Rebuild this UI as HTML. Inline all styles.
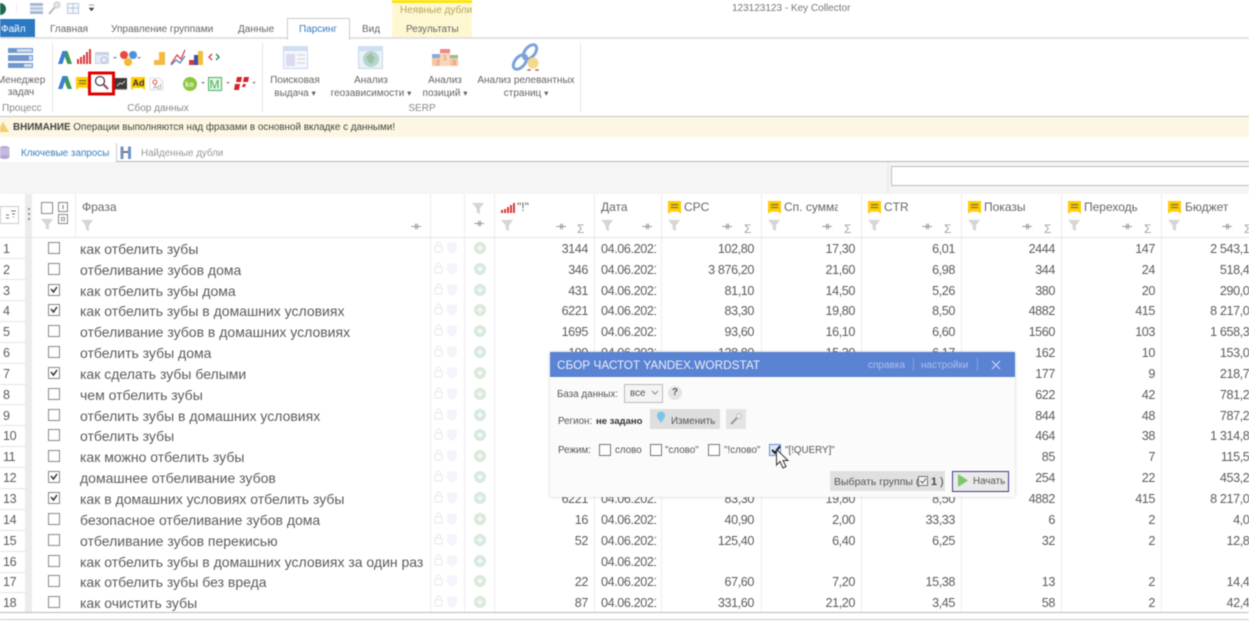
<!DOCTYPE html>
<html lang="ru"><head><meta charset="utf-8"><title>Key Collector</title>
<style>
html,body{margin:0;padding:0;background:#fff}
#p{position:relative;width:1249px;height:622px;overflow:hidden;background:#fff;font-family:"Liberation Sans",sans-serif;color:#666;filter:blur(.5px)}
#p div,#p span,#p svg{position:absolute}
.t{white-space:nowrap;font-size:10px;line-height:12px;color:#666}
.ce{transform:translateX(-50%);text-align:center}
.h{white-space:nowrap;font-size:12px;line-height:16px;color:#666;top:199px}
.s{white-space:nowrap;font-size:12px;line-height:16px;color:#a5a5a5;top:221px}
.r{left:0;width:1249px;height:21px;line-height:21px;font-size:12.6px;letter-spacing:-.4px;color:#5c5c5c;overflow:hidden;white-space:nowrap}
.r span{top:1px}
.n{left:3px}.r .f{left:80px;font-size:14px;letter-spacing:0}
.a{right:661px}.d{left:601px;width:55px;overflow:hidden}.b{right:495px}.c{right:394px}.e{right:294px}.g{right:194px}.k{right:94px}.l{right:-7px}
.dt{white-space:nowrap;font-size:9.8px;line-height:14px;color:#555}
.cb{width:10px;height:10px;border:1px solid #777;background:#fff}
</style></head><body><div id="p">

<svg width="0" height="0" style="left:0;top:0">
<defs>
<symbol id="fl" viewBox="0 0 14 14"><path d="M0 1H13L8.500 7V13L5 11V7Z" fill="#d6d6d6"/></symbol>
<symbol id="pin" viewBox="0 0 12 10"><path d="M0 5H11M5 2V8M7 2V8" stroke="#999" stroke-width="1.200" fill="none"/></symbol>
<symbol id="tag" viewBox="0 0 14 14"><path d="M0 0H14V14L11 11.500H3L0 14Z" fill="#fc0"/><path d="M3 4H11M3 7H11" stroke="#664" stroke-width="1.200"/></symbol>
<symbol id="A" viewBox="0 0 14 14"><path d="M4.500 0H9.500L14 13H9.500Z" fill="#3f9a5a"/><path d="M4.500 0H8.500L4.500 13H0Z" fill="#3d7fd6"/></symbol>
<g id="rowi">
<rect x="435" y="-3" width="7" height="6" rx="1" fill="none" stroke="#e8e8e8"/><path d="M436.500 -3V-5A2 2 0 0 1 440.500 -5V-3" fill="none" stroke="#e8e8e8"/>
<path d="M447 -6L452 -7L457 -6V-1C457 2 454 4 452 5C450 4 447 2 447 -1Z" fill="#f3f5fb"/>
<circle cx="480" cy="-1" r="6" fill="#d9e9dc"/><path d="M477 -1H483M480 -4V2" stroke="#fff" stroke-width="1.300"/>
</g>
<rect id="box" x="48.500" y="-6.500" width="11" height="11" fill="#fff" stroke="#888"/>
<path id="chk" d="M51 -2L53.500 1L57 -4" fill="none" stroke="#333" stroke-width="1.500"/>
</defs>
</svg>

<!-- title row -->
<div style="left:0;top:3px;width:6px;height:12px;background:#1c6b4e;border-radius:0 6px 6px 0"></div>
<div style="left:16px;top:3px;width:1px;height:11px;background:#eee"></div>
<svg style="left:28px;top:1px" width="70" height="15"><rect x="2" y="2" width="13" height="3" fill="#a3b8d8"/><rect x="2" y="6" width="13" height="3" fill="#b6c6e0"/><rect x="2" y="10" width="13" height="3" fill="#a3b8d8"/><path d="M21 13L27 6" stroke="#bbb" stroke-width="2"/><circle cx="29" cy="4" r="3" fill="#e4e4e4" stroke="#ccc"/><rect x="39.500" y="2.500" width="11" height="10" fill="#f3f6fb" stroke="#b8c9e0"/><path d="M39 7H51M45 2V13" stroke="#b8c9e0"/><path d="M61 4H66M61 7H66L63.500 10Z" fill="#444" stroke="#444" stroke-width=".5"/></svg>
<div class="t" style="left:732px;top:3px;color:#777">123123123 - Key Collector</div>

<!-- contextual tab -->
<div style="left:392px;top:0;width:80px;height:37px;background:#fdf8d2"></div>
<div style="left:392px;top:0;width:80px;height:3px;background:#ffe500"></div>
<div class="t" style="left:400px;top:5px;color:#b5a65c">Неявные дубли</div>

<!-- tabs -->
<div style="left:0;top:19px;width:35px;height:19px;background:#2b79c2"></div>
<div class="t" style="left:1px;top:24px;color:#fff">Файл</div>
<div class="t" style="left:50px;top:24px">Главная</div>
<div class="t" style="left:111px;top:24px;font-size:10.100px">Управление группами</div>
<div class="t" style="left:238px;top:24px">Данные</div>
<div class="t" style="left:362px;top:24px">Вид</div>
<div class="t" style="left:406px;top:24px">Результаты</div>
<div style="left:0;top:37px;width:1249px;height:2px;background:#e2e2e2"></div>
<div style="left:287px;top:18px;width:61px;height:21px;background:#fff;border:1px solid #ccc;border-bottom:0"></div>
<div class="t" style="left:299px;top:24px;color:#3a7cbd">Парсинг</div>

<!-- ribbon -->
<div style="left:52px;top:43px;width:1px;height:69px;background:#e6e6e6"></div>
<div style="left:262px;top:43px;width:1px;height:69px;background:#e6e6e6"></div>
<div style="left:580px;top:43px;width:1px;height:69px;background:#e6e6e6"></div>
<svg style="left:0;top:40px" width="600" height="60">
<g fill="#6f97cd"><rect x="8" y="8" width="25" height="5"/><rect x="8" y="15" width="25" height="6"/><rect x="8" y="23" width="25" height="5"/></g>
<g fill="#cfdcf0"><rect x="17" y="9" width="15" height="3"/><rect x="29" y="16" width="3" height="4"/><rect x="24" y="24" width="8" height="3"/></g>
<use href="#A" x="58" y="11" width="14" height="14"/>
<path d="M78 24V19M81 24V17M84 24V15M87 24V12M90 24V9" stroke="#d8383a" stroke-width="2"/>
<rect x="95.500" y="12.500" width="13" height="11" fill="#e8ecf6" stroke="#c8d2e6"/><rect x="95" y="12" width="14" height="3" fill="#c8d2e6"/><circle cx="104" cy="20" r="3" fill="none" stroke="#b9b9d8"/>
<path d="M113 17H117L115 19Z" fill="#888"/>
<circle cx="124" cy="15" r="4" fill="#e8483f"/><circle cx="133" cy="15" r="4" fill="#4d90e0"/><circle cx="128" cy="22" r="4" fill="#f5b82e"/>
<path d="M137 17H141L139 19Z" fill="#888"/>
<path d="M154 20H159V25H154ZM159 12H165V25H159Z" fill="#f4b942"/>
<path d="M171 24L177 15L181 19L185 10" fill="none" stroke="#d84a4a" stroke-width="1.300"/><path d="M171 25L176 20L180 23L185 16" fill="none" stroke="#5a7fc0" stroke-width="1.300"/>
<rect x="189" y="20" width="5" height="5" fill="#d33a3a"/><rect x="194" y="15" width="4" height="10" fill="#3e4fb0"/><rect x="198" y="11" width="5" height="14" fill="#f2c037"/>
<path d="M212 14L209 17L212 20" fill="none" stroke="#d64c4c" stroke-width="1.500"/><path d="M216 14L219 17L216 20" fill="none" stroke="#3e8f5a" stroke-width="1.500"/>
<use href="#A" x="58" y="36" width="14" height="14"/>
<use href="#tag" x="76" y="37" width="13" height="13"/>
<rect x="89.500" y="33" width="24" height="21" fill="#fff" stroke="#e30000" stroke-width="3"/>
<circle cx="100" cy="41" r="4.500" fill="#fff" stroke="#444" stroke-width="1.300"/><path d="M103 44L108 49" stroke="#a33a6a" stroke-width="2"/>
<rect x="115" y="38" width="12" height="11" fill="#3a3a3a"/><path d="M117 46L120 43L122 44L125 41" stroke="#ccc" fill="none"/>
<rect x="115" y="49" width="12" height="1" fill="#aaa"/>
<path d="M131 37H145V50L142 48H134L131 50Z" fill="#fc0"/>
<text x="132.500" y="46" font-size="9" font-weight="bold" fill="#333" font-family="Liberation Sans">Ad</text>
<path d="M150 38H159L163 42V50H150Z" fill="#fff" stroke="#ddd"/><circle cx="155" cy="42" r="2" fill="none" stroke="#d55"/>
<text x="153" y="49" font-size="7" fill="#999" font-family="Liberation Sans">Ad</text>
<circle cx="190" cy="44" r="7" fill="#8cc63f"/>
<text x="185" y="47" font-size="8" font-weight="bold" fill="#e8f5d0" font-family="Liberation Sans">ke</text>
<path d="M201 42H205L203 44Z" fill="#888"/>
<rect x="208.500" y="37.500" width="13" height="13" fill="#e6f5e6" stroke="#44b25a"/>
<text x="209.500" y="48.500" font-size="12" fill="#44b25a" font-family="Liberation Sans">M</text>
<path d="M226 42H230L228 44Z" fill="#888"/>
<path d="M237 37H242L241 42H236ZM244 37H249L248 42H243ZM235 44H240L239 50H234ZM243 44H246L245 47H242Z" fill="#d8222a"/>
<path d="M252 42H256L254 44Z" fill="#888"/>
<rect x="283.500" y="6.500" width="24" height="22" fill="#f4f7fc" stroke="#c8d8ee"/><rect x="283" y="6" width="25" height="5" fill="#cfdef2"/><rect x="286" y="14" width="9" height="12" fill="#dcdaf0"/><path d="M297 15H305M297 19H305M297 23H305" stroke="#d4d4d4"/>
<rect x="358.500" y="6.500" width="24" height="22" fill="#eaf2f8" stroke="#c8d8ee"/><rect x="358" y="6" width="25" height="5" fill="#cfdef2"/><circle cx="371" cy="19" r="8" fill="#b5d6cd"/><path d="M366 17L371 13L375 18L372 24L368 22Z" fill="#9cc3a8"/>
<rect x="432" y="14" width="8" height="5" fill="#8aabdc"/><rect x="440" y="9" width="10" height="5" fill="#e88"/><rect x="450" y="15" width="8" height="5" fill="#8fc08f"/><rect x="432" y="18" width="26" height="8" fill="#f6c7a6"/><rect x="440" y="13" width="10" height="13" fill="#f9d5ba"/>
<text x="436" y="25" font-size="7" fill="#d08a5a" font-family="Liberation Sans">2</text><text x="443" y="20" font-size="7" fill="#d08a5a" font-family="Liberation Sans">1</text><text x="452" y="25" font-size="7" fill="#d08a5a" font-family="Liberation Sans">3</text>
<ellipse cx="530" cy="12" rx="8.500" ry="5" transform="rotate(-50 530 12)" fill="none" stroke="#7da2dc" stroke-width="3"/>
<ellipse cx="520" cy="22" rx="8.500" ry="5" transform="rotate(-50 520 22)" fill="none" stroke="#7da2dc" stroke-width="3"/>
<circle cx="533" cy="23" r="5.500" fill="#f2d98b"/><path d="M529 29V31M537 29V31M527 30H531M535 30H539" stroke="#d66" stroke-width="1.200"/>
</svg>
<div class="t ce" style="left:21px;top:75px">Менеджер<br>задач</div>
<div class="t" style="left:2px;top:103px;color:#888">Процесс</div>
<div class="t ce" style="left:158px;top:103px;color:#888">Сбор данных</div>
<div class="t ce" style="left:422px;top:103px;color:#888">SERP</div>
<div class="t ce" style="left:295px;top:75px">Поисковая<br>выдача <small>▾</small></div>
<div class="t ce" style="left:371px;top:75px">Анализ<br>геозависимости <small>▾</small></div>
<div class="t ce" style="left:445px;top:75px">Анализ<br>позиций <small>▾</small></div>
<div class="t ce" style="left:526px;top:75px">Анализ релевантных<br>страниц <small>▾</small></div>

<!-- warning -->
<div style="left:0;top:116px;width:1249px;height:1px;background:#c4c4c4"></div>
<div style="left:0;top:117px;width:1249px;height:20px;background:#fdf6e2"></div>
<svg style="left:0;top:121px" width="10" height="12"><path d="M3 1L9 11H-3Z" fill="#f2cf6e"/></svg>
<div class="t" style="left:13px;top:122px;color:#444;font-size:9.900px"><b>ВНИМАНИЕ</b> Операции выполняются над фразами в основной вкладке с данными!</div>

<!-- doc tabs -->
<svg style="left:0;top:145px" width="135" height="16"><ellipse cx="4.500" cy="3" rx="5" ry="2" fill="#b3a6d4"/><rect x="-.5" y="3" width="10" height="9" fill="#c4b9de"/><ellipse cx="4.500" cy="12" rx="5" ry="2" fill="#b3a6d4"/><path d="M120.500 1.500H123.500V14H120.500ZM128 1.500H131V14H128Z" fill="#6f93c6"/><path d="M123 7H128" stroke="#777" stroke-width="2"/></svg>
<div class="t" style="left:21px;top:148px;color:#3a80c0;font-size:9.900px">Ключевые запросы</div>
<div class="t" style="left:141px;top:148px;color:#999;font-size:9.800px">Найденные дубли</div>
<div style="left:116px;top:143px;width:1px;height:19px;background:#ccc"></div>

<!-- toolbar strip -->
<div style="left:0;top:162px;width:1249px;height:32px;background:#f6f5f5"></div>
<div style="left:116px;top:161px;width:1133px;height:1px;background:#b5b5b5"></div>
<div style="left:887px;top:162px;width:2px;height:32px;background:#ececec"></div>
<div style="left:891px;top:166px;width:360px;height:18px;background:#fff;border:1px solid #bdbdbd;border-radius:1px"></div>

<!-- grid chrome -->
<div style="left:26px;top:194px;width:6px;height:418px;background:#ececec"></div>
<div style="left:0;top:237px;width:1249px;height:1px;background:#e4e4e4"></div>
<svg style="left:0;top:194px" width="1249" height="418">
<g stroke="#ececec"><path d="M25.500 0V418M75.500 0V44M430.500 0V418M464.500 0V418M494.500 0V418M594.500 0V418M661.500 0V418M761.500 0V418M861.500 0V418M961.500 0V418M1061.500 0V418M1161.500 0V418"/></g>
<g stroke="#e4e4e4"><path d="M0 64.500H25M0 85.500H25M0 106.500H25M0 127.500H25M0 148.500H25M0 169.500H25M0 190.500H25M0 210.500H25M0 231.500H25M0 252.500H25M0 273.500H25M0 294.500H25M0 315.500H25M0 336.500H25M0 357.500H25M0 378.500H25M0 398.500H25"/></g>
<rect x="0.500" y="12.500" width="18" height="17" fill="#fff" stroke="#ccc"/>
<path d="M6 24H9M6 21H9M11 17H16M12 20H15M13 23H14" stroke="#777"/>
<path d="M29 14V16M29 19V21M29 24V26" stroke="#777" stroke-width="1.500"/>
<rect x="41.500" y="8.500" width="11" height="11" fill="#fff" stroke="#888"/>
<rect x="58.500" y="8.500" width="9" height="9" fill="#fff" stroke="#888"/><path d="M63 11V15" stroke="#777"/>
<rect x="58.500" y="20.500" width="9" height="9" fill="#fff" stroke="#888"/><rect x="61.500" y="23.500" width="3" height="3" fill="none" stroke="#999"/>
<use href="#fl" x="41" y="24" width="13" height="13"/>
<use href="#fl" x="81" y="25" width="13" height="13"/>
<use href="#pin" x="411" y="28" width="11" height="9"/>
<use href="#fl" x="472" y="8" width="13" height="13"/><use href="#pin" x="474" y="25" width="11" height="9"/>
<path d="M502 12V9M505 12V8M508 12V6M511 12V4M514 12V2" transform="translate(0,7)" stroke="#d8383a" stroke-width="2"/>
<use href="#fl" x="501" y="25" width="13" height="13"/><use href="#pin" x="556" y="28" width="11" height="9"/>
<use href="#fl" x="601" y="25" width="13" height="13"/><use href="#pin" x="642" y="28" width="11" height="9"/>
<use href="#tag" x="668" y="7" width="13" height="13"/><use href="#fl" x="668" y="25" width="13" height="13"/><use href="#pin" x="722" y="28" width="11" height="9"/>
<use href="#tag" x="768" y="7" width="13" height="13"/><use href="#fl" x="768" y="25" width="13" height="13"/><use href="#pin" x="822" y="28" width="11" height="9"/>
<use href="#tag" x="868" y="7" width="13" height="13"/><use href="#fl" x="868" y="25" width="13" height="13"/><use href="#pin" x="922" y="28" width="11" height="9"/>
<use href="#tag" x="968" y="7" width="13" height="13"/><use href="#fl" x="968" y="25" width="13" height="13"/><use href="#pin" x="1022" y="28" width="11" height="9"/>
<use href="#tag" x="1068" y="7" width="13" height="13"/><use href="#fl" x="1068" y="25" width="13" height="13"/><use href="#pin" x="1122" y="28" width="11" height="9"/>
<use href="#tag" x="1168" y="7" width="13" height="13"/><use href="#fl" x="1168" y="25" width="13" height="13"/><use href="#pin" x="1222" y="28" width="11" height="9"/>
<g transform="translate(0,55)"><use href="#rowi"/><use href="#box"/></g>
<g transform="translate(0,76)"><use href="#rowi"/><use href="#box"/></g>
<g transform="translate(0,97)"><use href="#rowi"/><use href="#box"/><use href="#chk"/></g>
<g transform="translate(0,117)"><use href="#rowi"/><use href="#box"/><use href="#chk"/></g>
<g transform="translate(0,138)"><use href="#rowi"/><use href="#box"/></g>
<g transform="translate(0,159)"><use href="#rowi"/><use href="#box"/></g>
<g transform="translate(0,180)"><use href="#rowi"/><use href="#box"/><use href="#chk"/></g>
<g transform="translate(0,201)"><use href="#rowi"/><use href="#box"/></g>
<g transform="translate(0,222)"><use href="#rowi"/><use href="#box"/></g>
<g transform="translate(0,242)"><use href="#rowi"/><use href="#box"/></g>
<g transform="translate(0,263)"><use href="#rowi"/><use href="#box"/></g>
<g transform="translate(0,284)"><use href="#rowi"/><use href="#box"/><use href="#chk"/></g>
<g transform="translate(0,305)"><use href="#rowi"/><use href="#box"/><use href="#chk"/></g>
<g transform="translate(0,326)"><use href="#rowi"/><use href="#box"/></g>
<g transform="translate(0,347)"><use href="#rowi"/><use href="#box"/></g>
<g transform="translate(0,368)"><use href="#rowi"/><use href="#box"/></g>
<g transform="translate(0,388)"><use href="#rowi"/><use href="#box"/></g>
<g transform="translate(0,409)"><use href="#rowi"/><use href="#box"/></g>
</svg>

<!-- headers -->
<span class="h" style="left:82px">Фраза</span>
<span class="h" style="left:517px">"!"</span>
<span class="h" style="left:601px">Дата</span>
<span class="h" style="left:684px">CPC</span>
<span class="h" style="left:784px;width:54px;overflow:hidden">Сп. сумма</span>
<span class="h" style="left:884px">CTR</span>
<span class="h" style="left:984px">Показы</span>
<span class="h" style="left:1084px;width:53px;overflow:hidden">Переходы</span>
<span class="h" style="left:1185px">Бюджет</span>
<span class="s" style="left:577px">Σ</span>
<span class="s" style="left:744px">Σ</span>
<span class="s" style="left:844px">Σ</span>
<span class="s" style="left:944px">Σ</span>
<span class="s" style="left:1044px">Σ</span>
<span class="s" style="left:1144px">Σ</span>
<span class="s" style="left:1244px">Σ</span>

<!-- rows -->
<div class="r" style="top:238px"><span class="n">1</span><span class="f">как отбелить зубы</span><span class="a">3144</span><span class="d">04.06.2021</span><span class="b">102,80</span><span class="c">17,30</span><span class="e">6,01</span><span class="g">2444</span><span class="k">147</span><span class="l">2 543,10</span></div>
<div class="r" style="top:259px"><span class="n">2</span><span class="f">отбеливание зубов дома</span><span class="a">346</span><span class="d">04.06.2021</span><span class="b">3 876,20</span><span class="c">21,60</span><span class="e">6,98</span><span class="g">344</span><span class="k">24</span><span class="l">518,40</span></div>
<div class="r" style="top:280px"><span class="n">3</span><span class="f">как отбелить зубы дома</span><span class="a">431</span><span class="d">04.06.2021</span><span class="b">81,10</span><span class="c">14,50</span><span class="e">5,26</span><span class="g">380</span><span class="k">20</span><span class="l">290,00</span></div>
<div class="r" style="top:300px"><span class="n">4</span><span class="f">как отбелить зубы в домашних условиях</span><span class="a">6221</span><span class="d">04.06.2021</span><span class="b">83,30</span><span class="c">19,80</span><span class="e">8,50</span><span class="g">4882</span><span class="k">415</span><span class="l">8 217,00</span></div>
<div class="r" style="top:321px"><span class="n">5</span><span class="f">отбеливание зубов в домашних условиях</span><span class="a">1695</span><span class="d">04.06.2021</span><span class="b">93,60</span><span class="c">16,10</span><span class="e">6,60</span><span class="g">1560</span><span class="k">103</span><span class="l">1 658,30</span></div>
<div class="r" style="top:342px"><span class="n">6</span><span class="f">отбелить зубы дома</span><span class="a">199</span><span class="d">04.06.2021</span><span class="b">128,80</span><span class="c">15,30</span><span class="e">6,17</span><span class="g">162</span><span class="k">10</span><span class="l">153,00</span></div>
<div class="r" style="top:363px"><span class="n">7</span><span class="f">как сделать зубы белыми</span><span class="g">177</span><span class="k">9</span><span class="l">218,70</span></div>
<div class="r" style="top:384px"><span class="n">8</span><span class="f">чем отбелить зубы</span><span class="g">622</span><span class="k">42</span><span class="l">781,20</span></div>
<div class="r" style="top:405px"><span class="n">9</span><span class="f">отбелить зубы в домашних условиях</span><span class="g">844</span><span class="k">48</span><span class="l">787,20</span></div>
<div class="r" style="top:425px"><span class="n">10</span><span class="f">отбелить зубы</span><span class="g">464</span><span class="k">38</span><span class="l">1 314,80</span></div>
<div class="r" style="top:446px"><span class="n">11</span><span class="f">как можно отбелить зубы</span><span class="g">85</span><span class="k">7</span><span class="l">115,50</span></div>
<div class="r" style="top:467px"><span class="n">12</span><span class="f">домашнее отбеливание зубов</span><span class="g">254</span><span class="k">22</span><span class="l">453,20</span></div>
<div class="r" style="top:488px"><span class="n">13</span><span class="f">как в домашних условиях отбелить зубы</span><span class="a">6221</span><span class="d">04.06.2021</span><span class="b">83,30</span><span class="c">19,80</span><span class="e">8,50</span><span class="g">4882</span><span class="k">415</span><span class="l">8 217,00</span></div>
<div class="r" style="top:509px"><span class="n">14</span><span class="f">безопасное отбеливание зубов дома</span><span class="a">16</span><span class="d">04.06.2021</span><span class="b">40,90</span><span class="c">2,00</span><span class="e">33,33</span><span class="g">6</span><span class="k">2</span><span class="l">4,00</span></div>
<div class="r" style="top:530px"><span class="n">15</span><span class="f">отбеливание зубов перекисью</span><span class="a">52</span><span class="d">04.06.2021</span><span class="b">125,40</span><span class="c">6,40</span><span class="e">6,25</span><span class="g">32</span><span class="k">2</span><span class="l">12,80</span></div>
<div class="r" style="top:551px"><span class="n">16</span><span class="f">как отбелить зубы в домашних условиях за один раз</span><span class="d">04.06.2021</span></div>
<div class="r" style="top:571px"><span class="n">17</span><span class="f">как отбелить зубы без вреда</span><span class="a">22</span><span class="d">04.06.2021</span><span class="b">67,60</span><span class="c">7,20</span><span class="e">15,38</span><span class="g">13</span><span class="k">2</span><span class="l">14,40</span></div>
<div class="r" style="top:592px"><span class="n">18</span><span class="f">как очистить зубы</span><span class="a">87</span><span class="d">04.06.2021</span><span class="b">331,60</span><span class="c">21,20</span><span class="e">3,45</span><span class="g">58</span><span class="k">2</span><span class="l">42,40</span></div>

<!-- bottom -->
<div style="left:0;top:612px;width:1249px;height:10px;background:#fff"></div>
<div style="left:0;top:612px;width:1249px;height:1px;background:#bbb"></div>
<div style="left:0;top:619px;width:1249px;height:1px;background:#ccc"></div>

<!-- dialog -->
<div style="left:550px;top:352px;width:465px;height:145px;background:#fbfbfb;box-shadow:0 0 3px rgba(0,0,0,.2)">
<div style="left:0;top:0;width:465px;height:25px;background:#5b83d3"></div>
<div class="t" style="left:7px;top:7px;font-size:11.800px;color:#e8eefa">СБОР ЧАСТОТ YANDEX.WORDSTAT</div>
<div class="t" style="left:318px;top:8px;color:#a9c1ee;font-size:10px">справка</div>
<div style="left:363px;top:6px;width:1px;height:13px;background:#84a2e0"></div>
<div class="t" style="left:371px;top:8px;color:#a9c1ee;font-size:10px">настройки</div>
<div style="left:427px;top:6px;width:1px;height:13px;background:#84a2e0"></div>
<svg style="left:441px;top:8px" width="10" height="10"><path d="M1 1L9 9M9 1L1 9" stroke="#cfdcf5" stroke-width="1"/></svg>

<div class="dt" style="left:7px;top:36px">База данных:</div>
<div style="left:74px;top:32px;width:37px;height:17px;border:1px solid #bbb;background:#f4f4f4"></div>
<div class="dt" style="left:80px;top:35px">все</div>
<svg style="left:101px;top:38px" width="8" height="6"><path d="M1 1L4 4L7 1" stroke="#888" fill="none"/></svg>
<div style="left:118px;top:34px;width:14px;height:14px;border-radius:50%;background:#e4e4e4"></div>
<div class="dt" style="left:122px;top:34px;font-weight:bold;color:#555">?</div>

<div class="dt" style="left:8px;top:63px">Регион:</div>
<div class="dt" style="left:46px;top:63px;color:#333;font-weight:bold;font-size:9.500px">не задано</div>
<div style="left:100px;top:57px;width:70px;height:20px;background:#dedede"></div>
<svg style="left:105px;top:59px" width="12" height="14"><path d="M6 12C3 8 2 6 2 4.500A4 4 0 0 1 10 4.500C10 6 9 8 6 12Z" fill="#7dc3ea"/></svg>
<div class="dt" style="left:121px;top:63px">Изменить</div>
<div style="left:176px;top:57px;width:20px;height:20px;background:#e4e4e4"></div>
<svg style="left:178px;top:59px" width="16" height="16"><path d="M3 13L9 7" stroke="#999" stroke-width="2"/><circle cx="11" cy="5" r="2.500" fill="#eee" stroke="#bbb"/></svg>

<div class="dt" style="left:8px;top:92px">Режим:</div>
<div class="cb" style="left:49px;top:92px"></div>
<div class="dt" style="left:65px;top:92px">слово</div>
<div class="cb" style="left:100px;top:92px"></div>
<div class="dt" style="left:115px;top:92px">"слово"</div>
<div class="cb" style="left:158px;top:92px"></div>
<div class="dt" style="left:174px;top:92px">"!слово"</div>
<div class="cb" style="left:219px;top:92px;border-color:#6a8fd8;background:#dfe8fa"></div>
<div class="dt" style="left:235px;top:92px">"[!QUERY]"</div>
<svg style="left:220px;top:93px" width="12" height="11"><path d="M2 5L5 8L10 1" fill="none" stroke="#222" stroke-width="2"/></svg>
<svg style="left:224px;top:96px" width="20" height="24"><path d="M2.500 1.500V17L6 13.500L9 20L12 18.500L9 12.500H14Z" fill="#fff" stroke="#333" stroke-width="1"/></svg>

<div style="left:280px;top:119px;width:115px;height:20px;background:#e0e0e0"></div>
<div class="dt" style="left:284px;top:123px;font-size:10.500px">Выбрать группы (</div>
<div class="cb" style="left:368px;top:124px;width:8px;height:8px;background:#f5f5f5"></div>
<svg style="left:369px;top:125px" width="9" height="8"><path d="M1.500 4L3.500 6L7 1.500" stroke="#555" fill="none"/></svg>
<div class="dt" style="left:381px;top:123px;color:#444;font-size:10.800px"><b>1</b> )</div>
<div style="left:402px;top:119px;width:55px;height:19px;background:#eaeaea;border:1px solid #3d3c8c"></div>
<svg style="left:407px;top:122px" width="12" height="14"><path d="M1 0V13L11 6.500Z" fill="#7dc66e"/></svg>
<div class="dt" style="left:423px;top:123px">Начать</div>
</div>

</div></body></html>
